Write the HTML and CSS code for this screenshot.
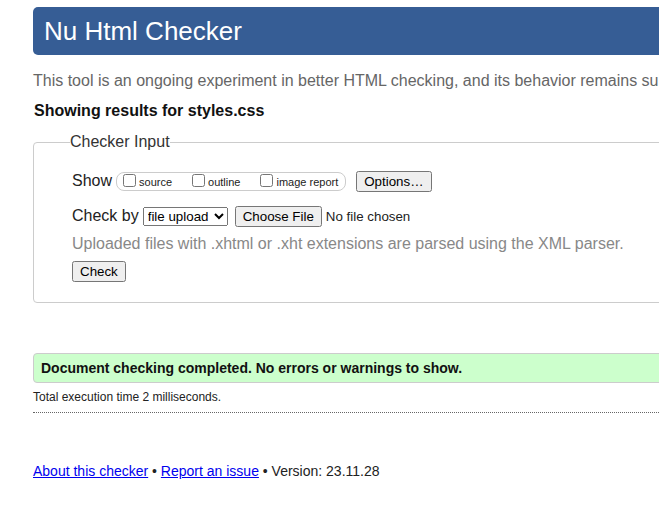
FILE: index.html
```html
<!DOCTYPE html>
<html lang="en">
<head>
<meta charset="utf-8">
<title>Nu Html Checker</title>
<link rel="stylesheet" href="styles.css">
</head>
<body>
<div class="page">
  <h1 class="title">Nu Html Checker</h1>
  <p class="intro">This tool is an ongoing experiment in better HTML checking, and its behavior remains subject to change</p>
  <p class="showing">Showing results for styles.css</p>
  <form class="checker">
    <fieldset class="inputs">
      <legend class="legend">Checker Input</legend>
      <div class="row row-show">
        <span class="label">Show</span>
        <span class="group"><label class="opt"><input type="checkbox" class="cb">source</label><label class="opt"><input type="checkbox" class="cb">outline</label><label class="opt opt-last"><input type="checkbox" class="cb">image report</label></span>
        <button type="button" class="btn btn-options">Options…</button>
      </div>
      <div class="row row-by">
        <span class="label">Check by</span>
        <select class="sel"><option>file upload</option></select>
        <input type="file" class="file">
      </div>
      <p class="hint">Uploaded files with .xhtml or .xht extensions are parsed using the XML parser.</p>
      <button type="button" class="btn btn-check">Check</button>
    </fieldset>
  </form>
  <div class="success">Document checking completed. No errors or warnings to show.</div>
  <p class="stats">Total execution time 2 milliseconds.</p>
  <hr class="sep">
  <p class="footer"><a href="#" class="link">About this checker</a> • <a href="#" class="link">Report an issue</a> • Version: 23.11.28</p>
</div>
</body>
</html>
```

FILE: styles.css
```css
html, body {
  margin: 0;
  padding: 0;
  overflow: hidden;
  background: #fff;
}
body {
  font-family: "Liberation Sans", Arial, sans-serif;
  color: #222;
}
.page {
  margin-left: 33px;
  padding-top: 7px;
  width: 1000px;
}
.title {
  margin: 0;
  height: 48px;
  line-height: 48px;
  padding-left: 11px;
  background: #365d95;
  color: #fff;
  font-size: 26px;
  font-weight: normal;
  border-radius: 5px;
}
.intro {
  margin: 17px 0 0;
  font-size: 16px;
  line-height: 18px;
  color: #666;
  white-space: nowrap;
}
.showing {
  margin: 12px 0 0 1px;
  font-size: 16px;
  line-height: 18px;
  font-weight: bold;
  color: #111;
}
.checker {
  margin: 0;
}
.inputs {
  margin: 13px 0 0;
  padding: 19px 0 20px 38px;
  border: 1px solid #ccc;
  border-radius: 4px;
  min-width: 0;
}
.legend {
  padding: 0;
  margin-left: -2px;
  font-size: 16px;
  line-height: 18px;
  color: #333;
}
.row {
  display: flex;
  align-items: center;
  height: 22px;
}
.label {
  font-size: 16px;
  color: #222;
  margin-right: 4px;
}
.group {
  display: inline-flex;
  align-items: center;
  height: 17px;
  border: 1px solid #ccc;
  border-radius: 8px;
  padding: 0 7px 0 2px;
  font-size: 11px;
}
.opt {
  display: inline-flex;
  align-items: center;
  margin-right: 16px;
  padding-top: 2px;
}
.opt-last {
  margin-right: 0;
}
.cb {
  margin: 0 3px 0 4px;
  width: 13px;
  height: 13px;
  position: relative;
  top: -2px;
}
.btn {
  font: 13.333px "Liberation Sans", Arial, sans-serif;
  height: 21px;
  padding: 0 6px;
}
.btn-options {
  margin-left: 10px;
}
.row-by {
  margin-top: 13px;
}
.sel {
  font: 13.333px "Liberation Sans", Arial, sans-serif;
  height: 19px;
  width: 85px;
  margin: 0 7px 0 0;
}
.file {
  font: 13.333px "Liberation Sans", Arial, sans-serif;
}
.hint {
  margin: 8px 0 0;
  font-size: 16px;
  line-height: 18px;
  color: #888;
}
.btn-check {
  margin-top: 8px;
  display: block;
}
.success {
  margin-top: 50px;
  height: 28px;
  line-height: 28px;
  padding-left: 7px;
  border: 1px solid #ccc;
  border-radius: 4px;
  background: #ccffcc;
  font-size: 14px;
  font-weight: bold;
  color: #111;
}
.stats {
  margin: 7px 0 0;
  font-size: 12px;
  line-height: 14px;
  color: #222;
}
.sep {
  margin: 8px 0 0;
  border: 0;
  border-top: 1px dotted #666;
  height: 0;
}
.footer {
  margin: 50px 0 0;
  font-size: 14px;
  line-height: 16px;
  color: #222;
}
.link {
  color: #0000ee;
  text-decoration: underline;
}
```
